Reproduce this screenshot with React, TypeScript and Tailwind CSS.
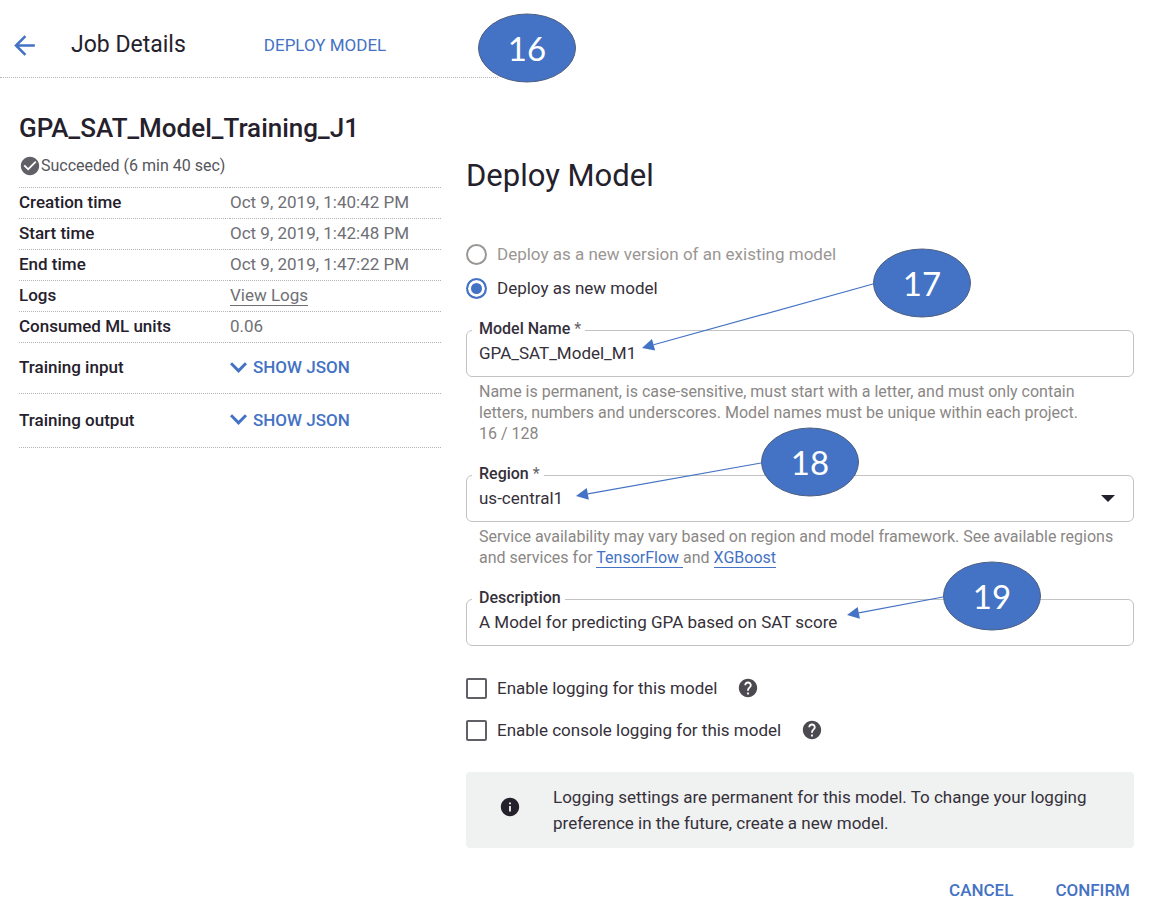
import { useState } from "react";
import type { ReactNode } from "react";
import { MdArrowBack, MdCheckCircle, MdHelp, MdInfo } from "react-icons/md";

type Point = { x: number; y: number };

/** Numbered ellipse with an optional arrow; coordinates are relative to the positioned parent. */
function Callout({ label, center, tip }: { label: string; center: Point; tip?: Point }) {
  const start = { x: center.x - 49, y: center.y + 1 };
  let arrow: ReactNode = null;
  if (tip) {
    const length = Math.hypot(start.x - tip.x, start.y - tip.y);
    const ux = (start.x - tip.x) / length;
    const uy = (start.y - tip.y) / length;
    const base = { x: tip.x + ux * 12, y: tip.y + uy * 12 };
    const head = [
      `${tip.x},${tip.y}`,
      `${base.x - uy * 6},${base.y + ux * 6}`,
      `${base.x + uy * 6},${base.y - ux * 6}`,
    ].join(" ");
    arrow = (
      <>
        <line x1={start.x} y1={start.y} x2={base.x} y2={base.y} stroke="#4472c4" strokeWidth="1.2" />
        <polygon points={head} fill="#4472c4" />
      </>
    );
  }
  return (
    <svg className="pointer-events-none absolute top-0 left-0 z-10 size-px overflow-visible">
      {arrow}
      <ellipse cx={center.x} cy={center.y} rx="48.5" ry="34" fill="#4472c4" stroke="#4f5f80" strokeWidth="1" />
      <text
        x={center.x}
        y={center.y + 13}
        textAnchor="middle"
        className="fill-white font-['Lato',sans-serif] text-[33px]"
      >
        {label}
      </text>
    </svg>
  );
}

function DetailRow({ name, height, children }: { name: string; height: string; children: ReactNode }) {
  return (
    <tr className={`border-b border-dotted border-[#b4b4b6] ${height}`}>
      <th scope="row" className="w-1/2 p-0 pb-0.5 text-left font-medium text-[#25212c]">
        {name}
      </th>
      <td className="p-0 pb-0.5 text-[#6f6f76]">{children}</td>
    </tr>
  );
}

function ShowJson() {
  return (
    <button type="button" className="flex items-center gap-1.5 font-medium text-[#4472c4]">
      <svg viewBox="0 0 17 11" className="h-[11px] w-[17px] fill-none stroke-current stroke-3">
        <path d="M1 1.2l7.5 7.6L16 1.2" />
      </svg>
      SHOW JSON
    </button>
  );
}

function Field({
  id,
  label,
  required,
  helper,
  callout,
  children,
}: {
  id: string;
  label: string;
  required?: boolean;
  helper?: ReactNode;
  callout: ReactNode;
  children: ReactNode;
}) {
  return (
    <div>
      <div className="relative h-[47px] rounded-md border border-[#c3c3c3]">
        <label
          htmlFor={id}
          className="absolute -top-3.5 left-[5px] bg-white pr-1 pl-[7px] text-base font-medium text-[#35303a]"
        >
          {label}
          {required && <span className="font-normal text-[#66636a]"> *</span>}
        </label>
        {children}
        {callout}
      </div>
      {helper && <div className="px-[13px] pt-1 text-base leading-[21px] text-[#8a8785]">{helper}</div>}
    </div>
  );
}

const controlClass =
  "size-full appearance-none rounded-md bg-transparent px-3 pb-0.5 text-[#35303a] outline-none";
const radioClass =
  "size-[21px] appearance-none rounded-full border-2 border-[#9a9693] checked:border-[#4472c4] checked:bg-[#4472c4] checked:shadow-[inset_0_0_0_3px_white]";
const checkboxClass =
  "size-[21px] appearance-none rounded-xs border-2 border-[#606066] checked:bg-[#4472c4]";
const linkClass = "border-b border-[#4472c4] text-[#4472c4]";

export default function App() {
  const [mode, setMode] = useState("new");
  return (
    <div className="min-h-screen bg-white font-['Roboto',sans-serif] text-[17px] leading-6 text-[#35303a]">
      <header className="relative flex h-[78px] items-center pt-3">
        <div className="absolute bottom-0 left-0 w-[498px] border-b border-dotted border-[#b4b4b6]" />
        <button type="button" aria-label="Back" className="ml-[9px] text-[#4472c4]">
          <MdArrowBack className="size-[31px]" />
        </button>
        <h1 className="ml-[31px] text-[23px] text-[#25212c]">Job Details</h1>
        <button type="button" className="ml-[78px] text-[#4472c4]">
          DEPLOY MODEL
        </button>
        <Callout label="16" center={{ x: 527, y: 48 }} />
      </header>

      <main className="grid grid-cols-[422px_minmax(0,1fr)] gap-x-[25px] pr-5 pl-[19px]">
        <section className="pt-8">
          <h2 className="text-[26px] leading-9 font-medium text-[#25212c]">GPA_SAT_Model_Training_J1</h2>
          <p className="mt-2 flex h-6 items-center text-base text-[#55555c]">
            <MdCheckCircle className="size-[22px] text-[#606066]" />
            Succeeded (6 min 40 sec)
          </p>
          <table className="mt-[9px] w-full border-collapse border-t border-dotted border-[#b4b4b6]">
            <tbody>
              <DetailRow name="Creation time" height="h-[31px]">Oct 9, 2019, 1:40:42 PM</DetailRow>
              <DetailRow name="Start time" height="h-[31px]">Oct 9, 2019, 1:42:48 PM</DetailRow>
              <DetailRow name="End time" height="h-[31px]">Oct 9, 2019, 1:47:22 PM</DetailRow>
              <DetailRow name="Logs" height="h-[31px]">
                <a href="#logs" className="border-b border-[#6f6f76]">View Logs</a>
              </DetailRow>
              <DetailRow name="Consumed ML units" height="h-[31px]">0.06</DetailRow>
              <DetailRow name="Training input" height="h-[51px]"><ShowJson /></DetailRow>
              <DetailRow name="Training output" height="h-[54px]"><ShowJson /></DetailRow>
            </tbody>
          </table>
        </section>

        <form className="pt-[78px]" onSubmit={(e) => e.preventDefault()}>
          <h2 className="text-[31px] leading-10 text-[#25212c]">Deploy Model</h2>

          <div className="mt-[46px] flex flex-col gap-2.5">
            <label className="flex h-6 items-center gap-2.5 text-[#9a9693]">
              <input
                type="radio"
                name="mode"
                checked={mode === "existing"}
                onChange={() => setMode("existing")}
                className={radioClass}
              />
              Deploy as a new version of an existing model
            </label>
            <label className="flex h-6 items-center gap-2.5">
              <input
                type="radio"
                name="mode"
                checked={mode === "new"}
                onChange={() => setMode("new")}
                className={radioClass}
              />
              Deploy as new model
            </label>
          </div>

          <div className="mt-[30px] flex flex-col gap-[31px]">
            <Field
              id="model-name"
              label="Model Name"
              required
              callout={<Callout label="17" center={{ x: 455, y: -48 }} tip={{ x: 175, y: 17 }} />}
              helper={
                <>
                  <p>
                    Name is permanent, is case-sensitive, must start with a letter, and must only contain
                    letters, numbers and underscores. Model names must be unique within each project.
                  </p>
                  <p>16 / 128</p>
                </>
              }
            >
              <input id="model-name" type="text" defaultValue="GPA_SAT_Model_M1" className={controlClass} />
            </Field>
            <Field
              id="region"
              label="Region"
              required
              callout={<Callout label="18" center={{ x: 343, y: -14 }} tip={{ x: 109, y: 20 }} />}
              helper={
                <p>
                  Service availability may vary based on region and model framework. See available regions
                  and services for{" "}
                  <a href="#tensorflow" className={linkClass}>TensorFlow </a>
                  and <a href="#xgboost" className={linkClass}>XGBoost</a>
                </p>
              }
            >
              <select id="region" defaultValue="us-central1" className={controlClass}>
                <option>us-central1</option>
              </select>
              <svg viewBox="0 0 14 7" className="pointer-events-none absolute top-[19px] right-[18px] h-[7px] w-3.5 fill-[#25212c]">
                <path d="M0 0h14L7 7z" />
              </svg>
            </Field>
            <Field
              id="description"
              label="Description"
              callout={<Callout label="19" center={{ x: 525, y: -4 }} tip={{ x: 380, y: 15 }} />}
            >
              <input
                id="description"
                type="text"
                defaultValue="A Model for predicting GPA based on SAT score"
                className={controlClass}
              />
            </Field>
          </div>

          <div className="mt-[30px] flex flex-col gap-[18px]">
            <div className="flex h-6 items-center gap-5">
              <label className="flex items-center gap-2.5">
                <input type="checkbox" className={checkboxClass} />
                Enable logging for this model
              </label>
              <MdHelp className="size-[22px] text-[#4c4a50]" />
            </div>
            <div className="flex h-6 items-center gap-5">
              <label className="flex items-center gap-2.5">
                <input type="checkbox" className={checkboxClass} />
                Enable console logging for this model
              </label>
              <MdHelp className="size-[22px] text-[#4c4a50]" />
            </div>
          </div>

          <div className="mt-[30px] flex items-start gap-8 rounded-sm bg-[#f0f1f1] py-3 pr-8 pl-[33px]">
            <MdInfo className="mt-3 size-[22px] shrink-0 text-[#25212c]" />
            <p className="leading-[26px]">
              Logging settings are permanent for this model. To change your logging preference in the future,
              create a new model.
            </p>
          </div>

          <div className="mt-[30px] flex justify-end gap-[42px] pr-1 font-medium text-[#4472c4]">
            <button type="button">CANCEL</button>
            <button type="submit">CONFIRM</button>
          </div>
        </form>
      </main>
    </div>
  );
}
